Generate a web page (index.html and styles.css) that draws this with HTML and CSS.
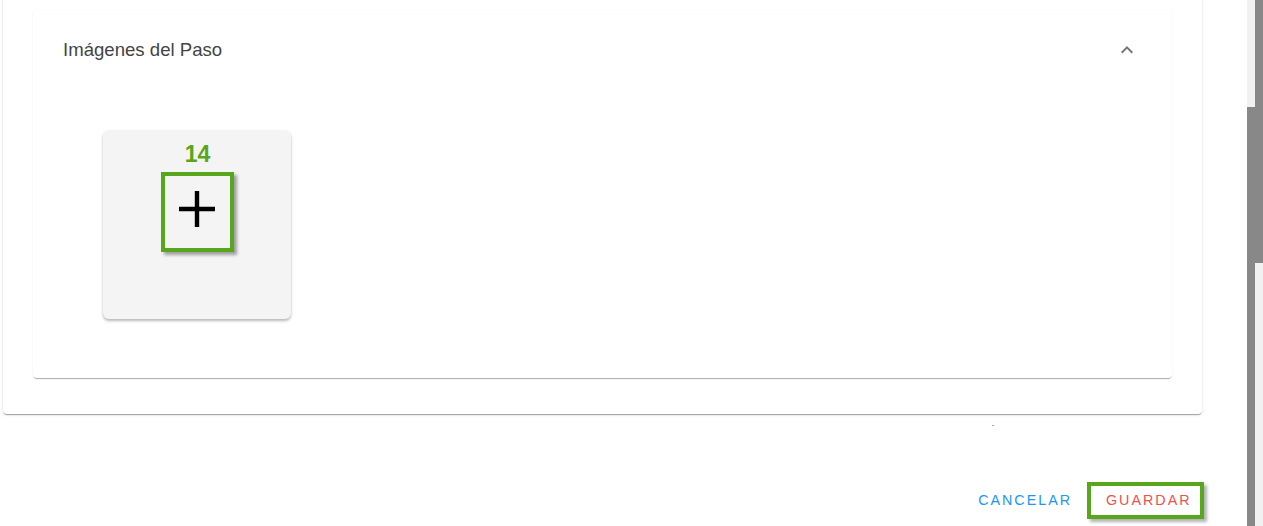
FILE: index.html
```html
<!DOCTYPE html>
<html lang="es">
<head>
<meta charset="utf-8">
<title>Imágenes del Paso</title>
<link rel="stylesheet" href="styles.css">
</head>
<body>
<div class="app">
  <main class="main">
    <section class="card">
      <div class="panel">
        <div class="panel-header">
          <span class="panel-title">Imágenes del Paso</span>
          <svg class="chevron" width="24" height="24" viewBox="0 0 24 24"><path d="M7.41 15.41L12 10.83l4.59 4.58L18 14l-6-6-6 6z" fill="#757575"/></svg>
        </div>
        <div class="panel-content">
          <div class="tile">
            <div class="tile-number">14</div>
            <button class="add-box" type="button" aria-label="Agregar imagen">
              <svg width="38" height="38" viewBox="0 0 38 38"><path d="M19 1v36M1 19h36" stroke="#000" stroke-width="4.4" fill="none"/></svg>
            </button>
          </div>
        </div>
      </div>
    </section>
    <div class="dot-row"><span class="dot"></span></div>
    <div class="actions">
      <button class="btn btn-cancel" type="button">CANCELAR</button>
      <button class="btn btn-save" type="button">GUARDAR</button>
    </div>
  </main>
  <div class="scroll scroll-inner"><div class="track-top"></div><div class="thumb"></div></div>
  <div class="scroll scroll-outer"><div class="thumb-top"></div><div class="track"></div></div>
</div>
</body>
</html>
```
FILE: styles.css
```css
* { box-sizing: border-box; }
html, body { margin: 0; padding: 0; background: #fff; }
body { font-family: Roboto, "Liberation Sans", Arial, sans-serif; overflow: hidden; }
.app { display: flex; height: 526px; width: 1263px; overflow: hidden; }
.main { width: 1247px; display: flex; flex-direction: column; }
.card {
  margin: -20px 45px 0 3px;
  padding: 30px 30px 36px 30px;
  background: #fff;
  border-radius: 4px;
  box-shadow: 0 2px 1px -1px rgba(0,0,0,.2), 0 1px 1px 0 rgba(0,0,0,.14), 0 1px 3px 0 rgba(0,0,0,.12);
}
.panel {
  background: #fff;
  border-radius: 4px;
  box-shadow: 0 2px 1px -1px rgba(0,0,0,.25), 0 1px 1px 0 rgba(0,0,0,.1), 0 0px 2px 0 rgba(0,0,0,.05);
}
.panel-header {
  height: 78px;
  display: flex;
  align-items: center;
  justify-content: space-between;
  padding: 2px 33px 0 30px;
}
.panel-title { font-size: 18.6px; color: #444; font-family: "Liberation Sans", Arial, sans-serif; }
.chevron { display: block; }
.panel-content { padding: 42px 0 59px 70px; }
.tile {
  width: 188px;
  height: 189px;
  background: #f4f4f4;
  border-radius: 6px;
  box-shadow: 0 2px 3px rgba(0,0,0,.28);
  display: flex;
  flex-direction: column;
  align-items: center;
  padding-top: 12px;
}
.tile-number {
  font-family: "Liberation Sans", Arial, sans-serif;
  font-weight: bold;
  font-size: 23px;
  line-height: 24px;
  color: #58a61b;
  margin-left: 1px;
}
.add-box {
  margin-top: 6px;
  width: 73px;
  height: 80px;
  border: 4px solid #58a61b;
  background: #f4f4f4;
  box-shadow: 3px 3px 3px rgba(0,0,0,.35);
  display: flex;
  align-items: center;
  justify-content: center;
  padding: 0 0 7px 0;
  cursor: pointer;
}
.add-box svg { display: block; }
.dot-row { margin-top: 11px; height: 1px; padding-left: 992px; display: flex; }
.dot { width: 2px; height: 1px; background: #aaa; }
.actions {
  margin-top: 56px;
  display: flex;
  justify-content: flex-end;
  padding-right: 43px;
}
.btn {
  font-family: "Liberation Sans", Arial, sans-serif;
  font-size: 14.3px;
  letter-spacing: 2px;
  height: 37px;
  background: transparent;
  border: none;
  cursor: pointer;
  display: flex;
  align-items: center;
  padding-bottom: 1px;
}
.btn-cancel { color: #2196f3; padding: 0 15px 1px 12px; }
.btn-save {
  color: #ef4f4f;
  border: 4px solid #58a61b;
  padding: 0 9px 1px 15px;
  width: 117px;
  box-shadow: 3px 3px 3px rgba(0,0,0,.3);
}
.scroll { width: 8px; display: flex; flex-direction: column; }
.scroll-inner .track-top { height: 107px; background: #f1f1f1; }
.scroll-inner .thumb { flex: 1; background: #888; }
.scroll-outer .thumb-top { height: 263px; background: #888; }
.scroll-outer .track { flex: 1; background: #f1f1f1; }
```
